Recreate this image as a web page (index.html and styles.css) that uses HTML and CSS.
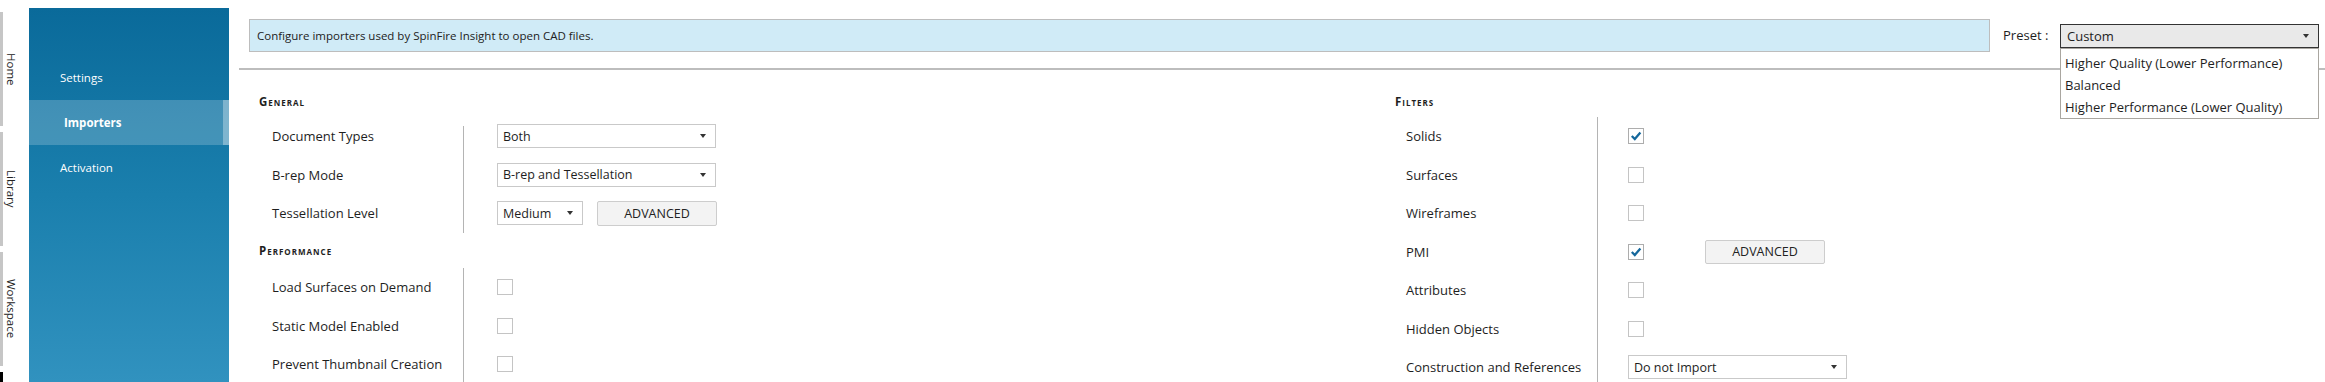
FILE: index.html
```html
<!DOCTYPE html>
<html>
<head>
  <meta charset="UTF-8">
  <title>Importers</title>
  <link rel="stylesheet" href="styles.css">
</head>
<body>
  <div class="app">
    <div class="tabs">
      <div class="tab">Home</div>
      <div class="tab">Library</div>
      <div class="tab">Workspace</div>
      <div class="tab-end"></div>
    </div>

    <nav class="nav">
      <div class="nav-item">Settings</div>
      <div class="nav-item active">Importers</div>
      <div class="nav-item">Activation</div>
    </nav>

    <main class="main">
      <header class="top">
        <div class="info">Configure importers used by SpinFire Insight to open CAD files.</div>
        <div class="preset-label">Preset :</div>
        <div class="preset-box">
          <div class="combo preset-combo"><span>Custom</span><i class="arrow"></i></div>
          <ul class="preset-list">
            <li>Higher Quality (Lower Performance)</li>
            <li>Balanced</li>
            <li>Higher Performance (Lower Quality)</li>
          </ul>
        </div>
      </header>
      <div class="sep"></div>

      <div class="content">
        <section class="col col-left">
          <h3 class="heading">General</h3>
          <div class="group rows-3">
            <div class="divider first"></div>
            <div class="label">Document Types</div>
            <div class="ctrl"><div class="combo wide"><span>Both</span><i class="arrow"></i></div></div>
            <div class="label">B-rep Mode</div>
            <div class="ctrl"><div class="combo wide"><span>B-rep and Tessellation</span><i class="arrow"></i></div></div>
            <div class="label">Tessellation Level</div>
            <div class="ctrl">
              <div class="combo small"><span>Medium</span><i class="arrow"></i></div>
              <button class="btn">ADVANCED</button>
            </div>
          </div>

          <h3 class="heading perf">Performance</h3>
          <div class="group rows-3">
            <div class="divider"></div>
            <div class="label">Load Surfaces on Demand</div>
            <div class="ctrl"><span class="check"></span></div>
            <div class="label">Static Model Enabled</div>
            <div class="ctrl"><span class="check"></span></div>
            <div class="label">Prevent Thumbnail Creation</div>
            <div class="ctrl"><span class="check"></span></div>
          </div>
        </section>

        <section class="col col-right">
          <h3 class="heading">Filters</h3>
          <div class="group rows-7">
            <div class="divider"></div>
            <div class="label">Solids</div>
            <div class="ctrl"><span class="check on"><svg viewBox="0 0 14 14" width="14" height="14"><polyline points="2.8,7 5.8,10 11.4,3.6" /></svg></span></div>
            <div class="label">Surfaces</div>
            <div class="ctrl"><span class="check"></span></div>
            <div class="label">Wireframes</div>
            <div class="ctrl"><span class="check"></span></div>
            <div class="label">PMI</div>
            <div class="ctrl">
              <span class="check on"><svg viewBox="0 0 14 14" width="14" height="14"><polyline points="2.8,7 5.8,10 11.4,3.6" /></svg></span>
              <button class="btn btn-pmi">ADVANCED</button>
            </div>
            <div class="label">Attributes</div>
            <div class="ctrl"><span class="check"></span></div>
            <div class="label">Hidden Objects</div>
            <div class="ctrl"><span class="check"></span></div>
            <div class="label">Construction and References</div>
            <div class="ctrl"><div class="combo wide"><span>Do not Import</span><i class="arrow"></i></div></div>
          </div>
        </section>
      </div>
    </main>
  </div>
</body>
</html>
```
FILE: styles.css
```css
* {
  box-sizing: border-box;
}
body {
  margin: 0;
  background: #fff;
  font-family: "Open Sans", "Noto Sans", sans-serif;
  font-size: 13px;
  color: #1e1e1e;
  overflow: hidden;
}
.app {
  display: flex;
  height: 382px;
  overflow: hidden;
}

/* left vertical tabs */
.tabs {
  width: 29px;
  flex: none;
  padding-top: 12px;
  display: flex;
  flex-direction: column;
  gap: 6px;
}
.tab {
  width: 19px;
  height: 114px;
  border-left: 3px solid #c6c6c6;
  writing-mode: vertical-rl;
  display: flex;
  align-items: center;
  justify-content: center;
  font-size: 11.5px;
  color: #222;
}
.tab-end {
  width: 3px;
  height: 10px;
  background: #000;
}

/* blue side menu */
.nav {
  width: 200px;
  flex: none;
  margin-top: 8px;
  padding-top: 47px;
  background: linear-gradient(to bottom, #0a6a9a 0%, #1a7fad 50%, #3192bf 100%);
}
.nav-item {
  height: 45px;
  display: flex;
  align-items: center;
  padding-left: 31px;
  color: #fff;
  font-size: 11.5px;
}
.nav-item.active {
  padding-left: 35px;
  font-weight: bold;
  background: rgba(255, 255, 255, 0.2);
  border-right: 6px solid rgba(255, 255, 255, 0.32);
}

.main {
  flex: 1;
  min-width: 0;
}
.top {
  height: 68px;
  padding: 19px 6px 0 20px;
  display: flex;
  align-items: flex-start;
}
.info {
  flex: 1;
  height: 33px;
  background: #d0ebf7;
  border: 1px solid #bdbdbd;
  padding-left: 7px;
  display: flex;
  align-items: center;
  font-size: 11.5px;
  color: #222;
}
.preset-label {
  width: 57px;
  margin-left: 13px;
  height: 33px;
  line-height: 33px;
}
.preset-box {
  width: 259px;
  position: relative;
  margin-top: 5px;
}
.sep {
  margin-left: 10px;
  height: 2px;
  background: #bdbdbd;
}

/* combo boxes */
.combo {
  height: 24px;
  border: 1px solid #c9c9c9;
  background: #fff;
  padding: 0 9px 0 5px;
  display: flex;
  align-items: center;
  justify-content: space-between;
  font-size: 12.5px;
}
.arrow {
  width: 0;
  height: 0;
  border-left: 3.5px solid transparent;
  border-right: 3.5px solid transparent;
  border-top: 4px solid #333;
}
.combo.wide {
  width: 219px;
}
.combo.small {
  width: 86px;
}
.preset-combo {
  background: #e9e9e9;
  border-color: #333;
  font-size: 13px;
  padding: 0 9px 0 6px;
}
.preset-list {
  position: absolute;
  top: 24px;
  left: 0;
  width: 259px;
  margin: 0;
  padding: 3px 0 0;
  list-style: none;
  background: #fff;
  border: 1px solid #a9a6a0;
  z-index: 2;
}
.preset-list li {
  height: 22px;
  line-height: 22px;
  padding-left: 4px;
  white-space: nowrap;
}

/* settings columns */
.content {
  display: flex;
  padding-left: 30px;
}
.col-left {
  width: 1136px;
  flex: none;
}
.col-right {
  flex: 1;
}
.heading {
  margin: 20px 0 3px;
  height: 24px;
  line-height: 24px;
  font-size: 11.5px;
  font-weight: bold;
  font-variant: small-caps;
  letter-spacing: 1px;
  text-transform: capitalize;
}
.heading.perf {
  margin: 6.5px 0 5px;
}
.group {
  display: grid;
  grid-template-columns: 204px 1px auto;
  grid-auto-rows: 38.5px;
}
.col-right .group {
  grid-template-columns: 202px 1px auto;
}
.divider {
  grid-column: 2;
  background: #b4b4b4;
}
.rows-3 .divider {
  grid-row: 1 / span 3;
}
.rows-7 .divider {
  grid-row: 1 / span 7;
}
.divider.first {
  margin-top: 9px;
}
.label {
  grid-column: 1;
  padding-left: 13px;
  display: flex;
  align-items: center;
  white-space: nowrap;
}
.col-right .label {
  padding-left: 11px;
}
.ctrl {
  grid-column: 3;
  padding-left: 33px;
  display: flex;
  align-items: center;
}
.col-right .ctrl {
  padding-left: 30px;
}

.btn {
  margin-left: 14px;
  width: 120px;
  height: 25px;
  border: 1px solid #cdcdcd;
  border-radius: 2px;
  background: #f3f3f3;
  font-family: inherit;
  font-size: 12.5px;
  color: #222;
  padding: 0;
}
.btn-pmi {
  margin-left: 61px;
  height: 24px;
}

.check {
  width: 16px;
  height: 16px;
  border: 1px solid #c4c4c4;
  background: #fff;
  display: flex;
  align-items: center;
  justify-content: center;
}
.check.on {
  border-color: #adadad;
}
.check svg polyline {
  fill: none;
  stroke: #15689c;
  stroke-width: 2.3;
}
```
